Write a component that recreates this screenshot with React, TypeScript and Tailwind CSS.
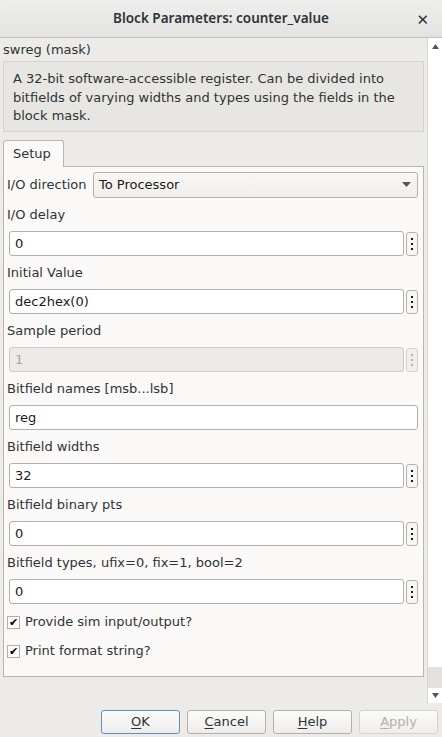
import React from "react";

const font = { fontFamily: '"DejaVu Sans", "Liberation Sans", sans-serif' };

function Dots({ disabled }: { disabled?: boolean }) {
  const c = disabled ? "bg-[#b5b3af]" : "bg-[#1a1a1a]";
  return (
    <div
      className={`ml-[2px] w-[12px] h-[24px] shrink-0 rounded-[3px] border ${
        disabled ? "border-[#d3d1cd] bg-[#f0efed]" : "border-[#b4b1ac] bg-[#f7f6f4]"
      } flex flex-col items-center justify-center gap-[3px]`}
    >
      <div className={`w-[2px] h-[2px] ${c}`} />
      <div className={`w-[2px] h-[2px] ${c}`} />
      <div className={`w-[2px] h-[2px] ${c}`} />
    </div>
  );
}

function Field({
  label,
  value,
  disabled,
  noButton,
}: {
  label: string;
  value: string;
  disabled?: boolean;
  noButton?: boolean;
}) {
  return (
    <div className="flex flex-col mb-[7px]">
      <div className="h-[20px] leading-[20px] pl-[3px] text-[#2e3436]">{label}</div>
      <div className="mt-[6px] flex items-center pl-[5px] pr-[5px]">
        <div
          className={`flex-1 h-[25px] rounded-[3px] border px-[5px] flex items-center ${
            disabled
              ? "bg-[#eceae7] border-[#cfccc8] text-[#a8a6a2]"
              : "bg-white border-[#b2afaa] text-[#1a1a1a]"
          }`}
        >
          {value}
        </div>
        {!noButton && <Dots disabled={disabled} />}
      </div>
    </div>
  );
}

function Check({ label }: { label: string }) {
  return (
    <div className="flex items-center h-[18px] pl-[3px]">
      <div className="w-[13px] h-[13px] bg-white border border-[#b2afaa] flex items-center justify-center text-[11px] leading-none text-black font-bold">
        ✔
      </div>
      <span className="ml-[5px] text-[#2e3436]">{label}</span>
    </div>
  );
}

function Btn({
  u,
  rest,
  focus,
  disabled,
}: {
  u: string;
  rest: string;
  focus?: boolean;
  disabled?: boolean;
}) {
  return (
    <div
      className={`w-[79px] h-[24px] rounded-[3px] border flex items-center justify-center bg-gradient-to-b from-[#fbfbfa] to-[#eeedeb] ${
        focus
          ? "border-[#5b8fd0]"
          : disabled
          ? "border-[#d6d3cf]"
          : "border-[#b4b1ac]"
      } ${disabled ? "text-[#b3b1ad]" : "text-[#2e3436]"}`}
    >
      <span>
        <span className="underline underline-offset-2">{u}</span>
        {rest}
      </span>
    </div>
  );
}

export default function App() {
  return (
    <div
      className="w-[442px] h-[737px] bg-[#ecebe8] flex flex-col text-[13px] overflow-hidden"
      style={font}
    >
      {/* title bar */}
      <div className="h-[38px] shrink-0 rounded-t-[6px] bg-gradient-to-b from-[#eeeeed] to-[#e3e3e2] border-b border-[#c3c0bb] flex items-center relative">
        <div
          className="flex-1 text-center text-[13.5px] font-semibold text-[#2e3436]"
          style={{ fontFamily: '"Noto Sans", "DejaVu Sans", sans-serif' }}
        >
          Block Parameters: counter_value
        </div>
        <div className="absolute right-[13px] top-[9px] text-[15px] font-bold text-[#2e3436]">✕</div>
      </div>

      {/* main */}
      <div className="flex flex-row h-[665px] shrink-0">
        <div className="flex-1 flex flex-col pl-[3px] pr-[3px]">
          <div className="h-[23px] leading-[24px] text-[#2e3436]">swreg (mask)</div>
          <div className="h-[71px] bg-[#e8e6e2] border border-[#d6d3ce] pl-[9px] pr-[4px] pt-[8px] leading-[18.5px] text-[#2e3436]">
            A 32-bit software-accessible register. Can be divided into bitfields of varying widths and types using the fields in the block mask.
          </div>
          <div className="mt-[8px] flex">
            <div className="w-[61px] h-[27px] border border-b-0 border-[#b9b6b1] rounded-t-[3px] bg-[#fbf9f7] flex items-center pl-[9px] text-[#2e3436] -mb-px relative z-10">
              Setup
            </div>
          </div>
          <div className="h-[511px] bg-[#fbf9f7] border border-[#b9b6b1] pt-[5px] flex flex-col">
            <div className="flex items-center mb-[7px] pl-[3px] pr-[5px]">
              <div className="w-[86px] text-[#2e3436]">I/O direction</div>
              <div className="flex-1 h-[26px] rounded-[3px] border border-[#b4b1ac] bg-gradient-to-b from-[#f8f7f5] to-[#efeeeb] flex items-center px-[5px] text-[#1a1a1a]">
                <span className="flex-1">To Processor</span>
                <svg width="9" height="6" viewBox="0 0 9 6" className="mr-[1px]">
                  <path d="M0 0 L9 0 L4.5 5 Z" fill="#555" />
                </svg>
              </div>
            </div>
            <Field label="I/O delay" value="0" />
            <Field label="Initial Value" value="dec2hex(0)" />
            <Field label="Sample period" value="1" disabled />
            <Field label="Bitfield names [msb...lsb]" value="reg" noButton />
            <Field label="Bitfield widths" value="32" />
            <Field label="Bitfield binary pts" value="0" />
            <Field label="Bitfield types, ufix=0, fix=1, bool=2" value="0" />
            <div className="mt-[2px] flex flex-col gap-[11px]">
              <Check label="Provide sim input/output?" />
              <Check label="Print format string?" />
            </div>
          </div>
        </div>
        {/* scrollbar */}
        <div className="w-[15px] shrink-0 flex flex-col border-l border-[#d8d6d2] bg-white">
          <div className="h-[17px] flex items-center justify-center">
            <svg width="7" height="5" viewBox="0 0 7 5">
              <path d="M0 5 L7 5 L3.5 0 Z" fill="#555" />
            </svg>
          </div>
          <div className="flex-1 flex flex-col">
            <div className="flex-1 bg-white" />
            <div className="h-[21px] bg-[#e4e2df]" />
          </div>
          <div className="h-[15px] flex items-center justify-center">
            <svg width="7" height="5" viewBox="0 0 7 5">
              <path d="M0 0 L7 0 L3.5 5 Z" fill="#555" />
            </svg>
          </div>
        </div>
      </div>

      {/* buttons */}
      <div className="flex justify-end gap-[7px] pr-[4px] pt-[7px]">
        <Btn u="O" rest="K" focus />
        <Btn u="C" rest="ancel" />
        <Btn u="H" rest="elp" />
        <Btn u="A" rest="pply" disabled />
      </div>
    </div>
  );
}
